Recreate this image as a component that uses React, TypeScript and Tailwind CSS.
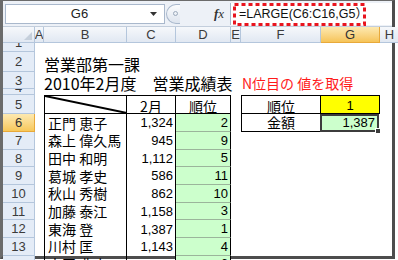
import React from 'react';

const jp = { fontFamily: '"Noto Sans CJK JP", "Liberation Sans", sans-serif' };
const num = { fontFamily: '"Liberation Sans", Arial, sans-serif' };

const rows = [
  { n: 7, name: '森上 偉久馬', v: '945', r: '9' },
  { n: 8, name: '田中 和明', v: '1,112', r: '5' },
  { n: 9, name: '葛城 孝史', v: '586', r: '11' },
  { n: 10, name: '秋山 秀樹', v: '862', r: '10' },
  { n: 11, name: '加藤 泰江', v: '1,158', r: '3' },
  { n: 12, name: '東海 登', v: '1,387', r: '1' },
  { n: 13, name: '川村 匡', v: '1,143', r: '4' },
  { n: 14, name: '吉田 典史', v: '1,105', r: '6' },
];

function RowHead({ n, h, active }: { n?: number; h: string; active?: boolean }) {
  return (
    <div
      className={`w-[32px] ${h} shrink-0 flex items-center justify-center overflow-hidden border-b border-r text-[13px] leading-none ${
        active
          ? 'bg-gradient-to-b from-[#fde9b0] to-[#f7c859] border-[#e8a93a] text-[#333]'
          : 'bg-[#e4ecf7] border-[#b4c6dc] text-[#3b3b3b]'
      }`}
      style={num}
    >
      {n}
    </div>
  );
}

function ColHead({ label, w, active }: { label: string; w: string; active?: boolean }) {
  return (
    <div
      className={`${w} h-full shrink-0 flex items-center justify-center overflow-hidden border-r border-b text-[13px] ${
        active
          ? 'bg-gradient-to-b from-[#fde9b0] to-[#f6c457] border-[#e8a93a] text-[#333]'
          : 'bg-gradient-to-b from-[#f6f8fb] to-[#e1e8f2] border-[#b4c6dc] text-[#3b3b3b]'
      }`}
      style={num}
    >
      {label}
    </div>
  );
}

export default function App() {
  return (
    <div className="w-[398px] h-[260px] bg-white overflow-hidden">
      <div className="w-[395px] h-[259px] border-l-[3px] border-t border-r-[3px] border-b-[3px] border-l-[#6b6b6b] border-t-[#6b6b6b] border-r-[#4d4d4d] border-b-[#4d4d4d] flex flex-col">
        {/* formula bar */}
        <div className="h-[26px] shrink-0 bg-[#edf1f7] flex items-center border-b border-[#c3cedc] relative">
          <div className="ml-[2px] w-[160px] h-[20px] bg-white border border-[#a9b8cc] flex items-center relative">
            <span className="flex-1 text-center text-[13px] text-[#222] pl-[4px]" style={num}>G6</span>
            <svg width="9" height="6" viewBox="0 0 9 6" className="mr-[6px]">
              <path d="M1 1 L8 1 L4.5 5 Z" fill="#333" />
            </svg>
          </div>
          <div className="ml-[1px] w-[14px] h-[20px] rounded-l-full border border-r-0 border-[#a9b8cc] bg-gradient-to-b from-[#fbfcfd] to-[#dde4ee] flex items-center justify-center">
            <div className="w-[5px] h-[5px] rounded-full border border-[#9aa9bb] ml-[3px]" />
          </div>
          <div className="w-[50px] h-[20px] flex items-center justify-end pr-[6px]">
            <span className="italic text-[13px] text-[#333]" style={{ fontFamily: '"Liberation Serif", serif' }}>
              <b>f</b>x
            </span>
          </div>
          <div className="flex-1 h-[22px] bg-white border-l border-[#a9b8cc] flex items-center">
            <span className="ml-[8px] text-[12.5px] text-[#111] whitespace-nowrap" style={num}>
              =LARGE(C6:C16,G5<span style={jp}>）</span>
            </span>
          </div>
          <svg className="absolute left-[230px] top-[2px]" width="133" height="23" viewBox="0 0 133 23">
            <rect x="1.5" y="1.5" width="130" height="20" fill="none" stroke="#e8141e" strokeWidth="3" strokeDasharray="4 3" />
          </svg>
        </div>

        {/* column headers */}
        <div className="h-[16px] shrink-0 flex">
          <div className="w-[32px] h-full shrink-0 bg-gradient-to-b from-[#f6f8fb] to-[#e1e8f2] border-r border-b border-[#b4c6dc] relative">
            <svg className="absolute right-[2px] bottom-[2px]" width="8" height="8" viewBox="0 0 8 8">
              <path d="M8 0 L8 8 L0 8 Z" fill="#c5cfdb" />
            </svg>
          </div>
          <ColHead label="A" w="w-[9px]" />
          <ColHead label="B" w="w-[83px]" />
          <ColHead label="C" w="w-[49px]" />
          <ColHead label="D" w="w-[55px]" />
          <ColHead label="E" w="w-[10px]" />
          <ColHead label="F" w="w-[80px]" />
          <ColHead label="G" w="w-[59px]" active />
          <ColHead label="H" w="w-[20px]" />
        </div>

        {/* row 1 */}
        <div className="flex h-[9px] shrink-0">
          <div className="w-[32px] h-full shrink-0 bg-[#e4ecf7] border-r border-b border-[#b4c6dc] overflow-hidden flex justify-center">
            <span className="text-[13px] leading-none -mt-[7px] text-[#3b3b3b]" style={num}>1</span>
          </div>
        </div>

        {/* row 2 */}
        <div className="flex h-[20px] shrink-0">
          <RowHead n={2} h="h-[20px]" />
          <div className="w-[9px]" />
          <div className="text-[16px] leading-[20px] pt-[2px] text-black whitespace-nowrap" style={jp}>営業部第一課</div>
        </div>

        {/* row 3 */}
        <div className="flex h-[17px] shrink-0">
          <RowHead n={3} h="h-[17px]" />
          <div className="w-[9px] shrink-0" />
          <div className="w-[197px] shrink-0 text-[16px] leading-[17px] pt-[3px] text-black whitespace-nowrap" style={jp}>
            2010年2月度　営業成績表
          </div>
          <div className="text-[14px] leading-[17px] pt-[3px] text-[#ff1a1a] whitespace-nowrap pl-[1px]" style={jp}>
            N位目の 値を取得
          </div>
        </div>

        {/* row 4 */}
        <div className="flex h-[6px] shrink-0">
          <div className="w-[32px] h-full shrink-0 bg-[#e4ecf7] border-r border-b border-[#b4c6dc] overflow-hidden flex justify-center">
            <span className="text-[13px] leading-none -mt-[8px] text-[#3b3b3b]" style={num}>4</span>
          </div>
        </div>

        {/* row 5 */}
        <div className="flex h-[19px] shrink-0">
          <RowHead n={5} h="h-[19px]" />
          <div className="w-[9px] shrink-0" />
          <div className="w-[83px] shrink-0 border border-black relative">
            <svg className="absolute inset-0" width="82" height="17" viewBox="0 0 82 17" preserveAspectRatio="none">
              <line x1="0" y1="0" x2="82" y2="17" stroke="#000" strokeWidth="2" />
            </svg>
          </div>
          <div className="w-[49px] shrink-0 border-y border-r border-black flex items-center justify-center pt-[3px] text-[14px]" style={jp}>2月</div>
          <div className="w-[55px] shrink-0 border-y border-r border-black flex items-center justify-center pt-[3px] text-[14px]" style={jp}>順位</div>
          <div className="w-[10px] shrink-0" />
          <div className="w-[80px] shrink-0 border border-black flex items-center justify-center pt-[3px] text-[14px]" style={jp}>順位</div>
          <div className="w-[59px] shrink-0 border-y border-r border-black bg-[#ffff00] flex items-center justify-center pt-[2px] text-[13px]" style={num}>1</div>
        </div>

        {/* row 6 */}
        <div className="flex h-[18px] shrink-0">
          <RowHead n={6} h="h-[18px]" active />
          <div className="w-[9px] shrink-0" />
          <div className="w-[83px] shrink-0 border-x border-black flex items-center pl-[3px] text-[14px] whitespace-nowrap" style={jp}>正門 恵子</div>
          <div className="w-[49px] shrink-0 border-r border-black flex items-center justify-end pr-[2px] text-[13px]" style={num}>1,324</div>
          <div className="w-[55px] shrink-0 border-r border-b border-b-[#9bb59b] border-r-black bg-[#ccffcc] flex items-center justify-end pr-[2px] text-[13px]" style={num}>2</div>
          <div className="w-[10px] shrink-0" />
          <div className="w-[80px] shrink-0 border-x border-b border-black flex items-center justify-center text-[14px]" style={jp}>金額</div>
          <div className="w-[59px] shrink-0 bg-[#ccffcc] border-2 border-[#3c3c3c] -ml-[1px] flex items-center justify-end pr-[2px] text-[13px] relative" style={num}>
            1,387
            <div className="absolute -right-[4px] -bottom-[4px] w-[6px] h-[6px] bg-[#3c3c3c] border border-white" />
          </div>
        </div>

        {rows.map((r) => (
          <div key={r.n} className="flex h-[17.7px] shrink-0">
            <RowHead n={r.n} h="h-[17.7px]" />
            <div className="w-[9px] shrink-0" />
            <div className="w-[83px] shrink-0 border-x border-black flex items-center pl-[3px] text-[14px] whitespace-nowrap" style={jp}>{r.name}</div>
            <div className="w-[49px] shrink-0 border-r border-black flex items-center justify-end pr-[2px] text-[13px]" style={num}>{r.v}</div>
            <div className="w-[55px] shrink-0 border-r border-b border-b-[#9bb59b] border-r-black bg-[#ccffcc] flex items-center justify-end pr-[2px] text-[13px]" style={num}>{r.r}</div>
          </div>
        ))}
      </div>
    </div>
  );
}
